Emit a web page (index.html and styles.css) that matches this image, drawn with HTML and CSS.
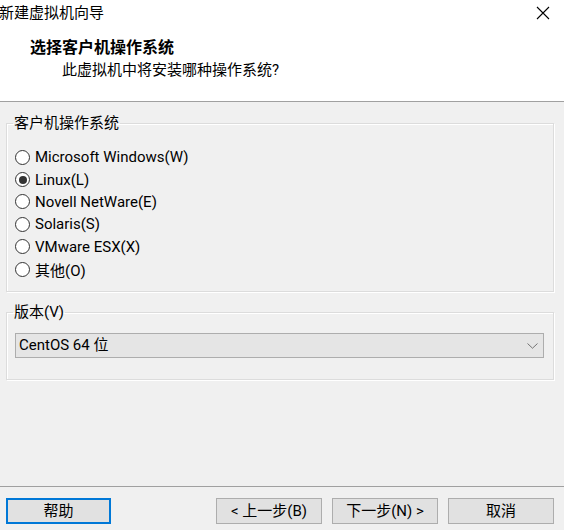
FILE: index.html
```html
<!DOCTYPE html>
<html lang="zh-CN">
<head>
<meta charset="utf-8">
<title>新建虚拟机向导</title>
<link rel="stylesheet" href="styles.css">
</head>
<body>
<div class="window">
  <div class="header">
    <div class="titlebar">
      <span class="title">新建虚拟机向导</span>
      <svg class="close" width="14" height="14" viewBox="0 0 14 14"><path d="M1 1L13 13M13 1L1 13" stroke="#000" stroke-width="1.1" fill="none"/></svg>
    </div>
    <div class="heading">选择客户机操作系统</div>
    <div class="subheading">此虚拟机中将安装哪种操作系统?</div>
  </div>
  <div class="content">
    <fieldset class="group group-os">
      <legend>客户机操作系统</legend>
      <div class="radios">
        <div class="radio"><span class="dot"></span><span>Microsoft Windows(W)</span></div>
        <div class="radio checked"><span class="dot"></span><span>Linux(L)</span></div>
        <div class="radio"><span class="dot"></span><span>Novell NetWare(E)</span></div>
        <div class="radio"><span class="dot"></span><span>Solaris(S)</span></div>
        <div class="radio"><span class="dot"></span><span>VMware ESX(X)</span></div>
        <div class="radio"><span class="dot"></span><span>其他(O)</span></div>
      </div>
    </fieldset>
    <fieldset class="group group-ver">
      <legend>版本(V)</legend>
      <div class="select">
        <span>CentOS 64 位</span>
        <svg class="chev" width="11" height="6" viewBox="0 0 11 6"><path d="M0.5 0.5L5.5 5.2L10.5 0.5" stroke="#666" stroke-width="0.9" fill="none"/></svg>
      </div>
    </fieldset>
  </div>
  <div class="footer">
    <div class="btn btn-focus">帮助</div>
    <div class="spacer"></div>
    <div class="btn">&lt; 上一步(B)</div>
    <div class="btn">下一步(N) &gt;</div>
    <div class="btn">取消</div>
  </div>
</div>
</body>
</html>
```
FILE: styles.css
```css
html, body {
  margin: 0;
  padding: 0;
}
body {
  background: #f0f0f0;
  font-family: Roboto, "Noto Sans CJK SC", "Noto Sans", sans-serif;
  font-size: 15px;
  color: #000;
}
.window {
  width: 564px;
  height: 530px;
  display: flex;
  flex-direction: column;
  overflow: hidden;
}
.header {
  background: #fff;
  height: 101px;
  border-bottom: 1px solid #a0a0a0;
  box-sizing: content-box;
}
.titlebar {
  height: 26px;
  display: flex;
  align-items: center;
  justify-content: space-between;
  padding: 0 14px 0 0;
}
.title {
  line-height: 26px;
  margin-left: -1px;
}
.close {
  display: block;
  margin-top: -1px;
}
.heading {
  font-weight: bold;
  font-size: 16px;
  padding-left: 30px;
  line-height: 22px;
  margin-top: 11px;
}
.subheading {
  padding-left: 62px;
  line-height: 22px;
  margin-top: 0;
}
.content {
  flex: 1;
  padding: 0 10px 0 6px;
}
.group {
  margin: 0;
  border: 1px solid #dcdcdc;
  box-shadow: inset 1px 1px 0 #fff, 1px 1px 0 #fff;
  padding: 0 0 0 6px;
  min-width: 0;
}
.group legend {
  padding: 0 1px;
  line-height: 20px;
}
.group-os {
  margin-top: 11px;
  padding-bottom: 11px;
}
.radios {
  margin-top: 13px;
  margin-left: 2px;
}
.radio {
  height: 22.4px;
  display: flex;
  align-items: center;
  gap: 5px;
}
.dot {
  width: 13px;
  height: 13px;
  border: 1px solid #333;
  border-radius: 50%;
  background: #fff;
  display: flex;
  align-items: center;
  justify-content: center;
  flex: none;
}
.radio.checked .dot::after {
  content: "";
  width: 8px;
  height: 8px;
  border-radius: 50%;
  background: #333;
}
.group-ver {
  margin-top: 10px;
  padding-bottom: 21px;
}
.select {
  margin: 11px 9px 0 2px;
  height: 23px;
  border: 1px solid #adadad;
  background: #e5e5e5;
  display: flex;
  align-items: center;
  justify-content: space-between;
  padding: 0 5px 0 3px;
  line-height: 23px;
}
.chev {
  display: block;
}
.footer {
  border-top: 1px solid #a0a0a0;
  height: 44px;
  box-sizing: border-box;
  padding: 11px 10px 0 6px;
  display: flex;
  gap: 10px;
}
.spacer {
  flex: 1;
}
.btn {
  width: 106px;
  height: 26px;
  box-sizing: border-box;
  border: 1px solid #adadad;
  background: #e1e1e1;
  display: flex;
  align-items: center;
  justify-content: center;
  line-height: 24px;
}
.btn-focus {
  width: 105px;
  border: 2px solid #0078d7;
}
```
